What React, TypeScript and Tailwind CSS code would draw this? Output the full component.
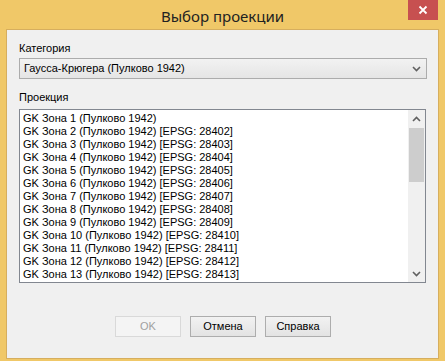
import React from "react";

const rows = [
  "GK Зона 1 (Пулково 1942)",
  "GK Зона 2 (Пулково 1942) [EPSG: 28402]",
  "GK Зона 3 (Пулково 1942) [EPSG: 28403]",
  "GK Зона 4 (Пулково 1942) [EPSG: 28404]",
  "GK Зона 5 (Пулково 1942) [EPSG: 28405]",
  "GK Зона 6 (Пулково 1942) [EPSG: 28406]",
  "GK Зона 7 (Пулково 1942) [EPSG: 28407]",
  "GK Зона 8 (Пулково 1942) [EPSG: 28408]",
  "GK Зона 9 (Пулково 1942) [EPSG: 28409]",
  "GK Зона 10 (Пулково 1942) [EPSG: 28410]",
  "GK Зона 11 (Пулково 1942) [EPSG: 28411]",
  "GK Зона 12 (Пулково 1942) [EPSG: 28412]",
  "GK Зона 13 (Пулково 1942) [EPSG: 28413]",
];

function Chevron({ up = false }: { up?: boolean }) {
  return (
    <svg width="9" height="6" viewBox="0 0 9 6" className="block">
      <path
        d={up ? "M1 5 L4.5 1.5 L8 5" : "M1 1 L4.5 4.5 L8 1"}
        fill="none"
        stroke="#606060"
        strokeWidth="1.6"
      />
    </svg>
  );
}

export default function App() {
  return (
    <div
      className="w-[445px] h-[361px] bg-[#F0C868] flex flex-col text-[11px] leading-[13px] text-black"
      style={{ fontFamily: '"Liberation Sans", Arial, sans-serif' }}
    >
      <div className="relative h-[29px] flex items-center justify-center">
        <span
          className="text-[15px] leading-[20px] text-[#222] pt-[3px]"
          style={{ fontFamily: '"Noto Sans", "Open Sans", sans-serif' }}
        >
          Выбор проекции
        </span>
        <div className="absolute right-[7px] top-0 w-[30px] h-[20px] bg-[#C75050] flex items-center justify-center">
          <svg width="10" height="10" viewBox="0 0 10 10">
            <path d="M1.5 1.5 L8.5 8.5 M8.5 1.5 L1.5 8.5" stroke="#fff" strokeWidth="1.8" />
          </svg>
        </div>
      </div>
      <div className="mx-[6px] h-[330px] border border-[#D6AE5E] bg-[#F0F0F0] flex flex-col pl-[12px]">
        <div className="mt-[12px] h-[13px]">Категория</div>
        <div className="mt-[3px] w-[408px] h-[21px] border border-[#ACACAC] bg-gradient-to-b from-[#F2F2F2] to-[#E5E5E5] flex items-center justify-between pl-[4px] pr-[5px]">
          <span>Гаусса-Крюгера (Пулково 1942)</span>
          <Chevron />
        </div>
        <div className="mt-[12px] h-[13px]">Проекция</div>
        <div className="mt-[5px] w-[407px] h-[174px] border border-[#828790] bg-white flex">
          <div className="flex-1 pt-[2px] pl-[3px] overflow-hidden">
            {rows.map((r) => (
              <div key={r} className="h-[13px] whitespace-nowrap">
                {r}
              </div>
            ))}
          </div>
          <div className="w-[17px] bg-[#F0F0F0] flex flex-col items-center">
            <div className="h-[17px] flex items-center justify-center">
              <Chevron up />
            </div>
            <div className="mt-[1px] w-[15px] h-[54px] bg-[#CDCDCD]" />
            <div className="flex-1" />
            <div className="h-[17px] flex items-center justify-center">
              <Chevron />
            </div>
          </div>
        </div>
        <div className="mt-[33px] ml-[96px] flex gap-[9px]">
          <div className="w-[66px] h-[21px] border border-[#D9D9D9] bg-[#F4F4F4] text-[#A0A0A0] flex items-center justify-center">
            OK
          </div>
          <div className="w-[66px] h-[21px] border border-[#ADADAD] bg-gradient-to-b from-[#F2F2F2] to-[#E3E3E3] flex items-center justify-center">
            Отмена
          </div>
          <div className="w-[66px] h-[21px] border border-[#ADADAD] bg-gradient-to-b from-[#F2F2F2] to-[#E3E3E3] flex items-center justify-center">
            Справка
          </div>
        </div>
      </div>
    </div>
  );
}
